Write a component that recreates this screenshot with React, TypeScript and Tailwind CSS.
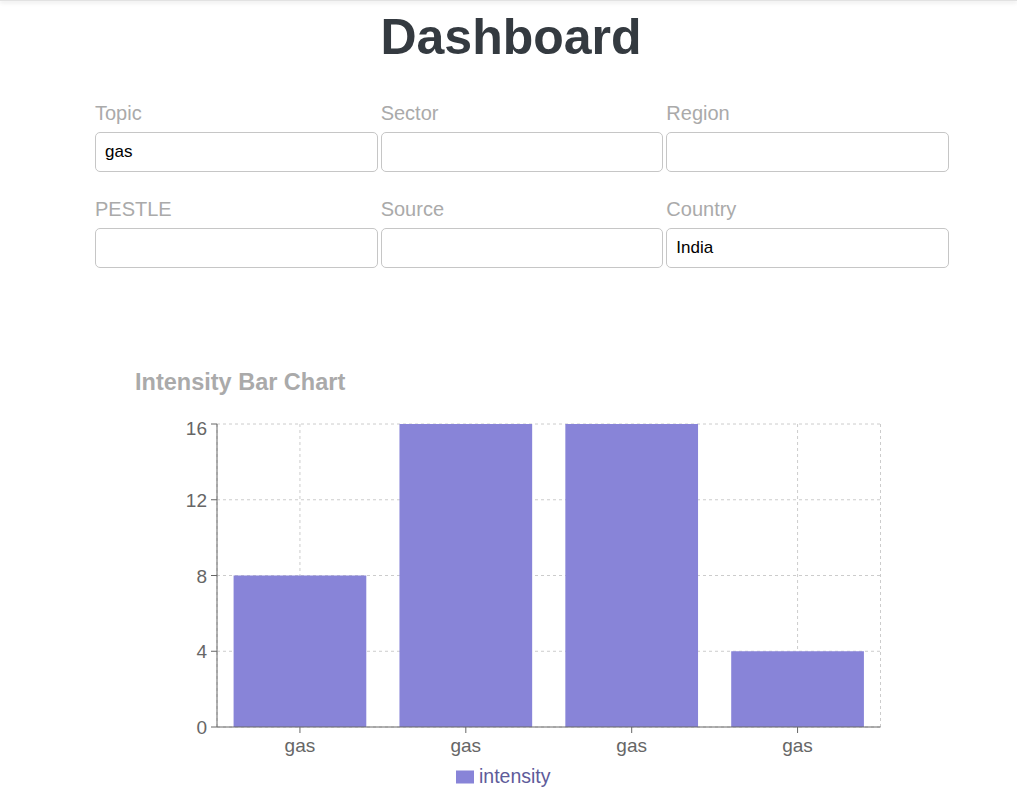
const fields = [
  { label: 'Topic', value: 'gas' },
  { label: 'Sector', value: '' },
  { label: 'Region', value: '' },
  { label: 'PESTLE', value: '' },
  { label: 'Source', value: '' },
  { label: 'Country', value: 'India' },
];

const data = [8, 16, 16, 4];

function IntensityChart() {
  const left = 82;
  const right = 745.5;
  const top = 24;
  const bottom = 327;
  const band = (right - left) / data.length;
  const yOf = (v: number) => bottom - (v / 16) * (bottom - top);
  const ticks = [0, 4, 8, 12, 16];

  return (
    <svg width={760} height={387} className="block" style={{ fontFamily: '"Liberation Sans", Arial, sans-serif' }}>
      {/* grid */}
      {ticks.map((t) => (
        <line key={t} x1={left} x2={right} y1={yOf(t)} y2={yOf(t)} stroke="#ccc" strokeDasharray="3 3" />
      ))}
      {[left, ...data.map((_, i) => left + band * i + band / 2), right].map((x, i) => (
        <line key={i} x1={x} x2={x} y1={top} y2={bottom} stroke="#ccc" strokeDasharray="3 3" />
      ))}

      {/* bars */}
      {data.map((v, i) => (
        <rect
          key={i}
          x={left + band * i + band * 0.1}
          y={yOf(v)}
          width={band * 0.8}
          height={bottom - yOf(v)}
          fill="#8884d8"
        />
      ))}

      {/* y axis */}
      <line x1={left} x2={left} y1={top} y2={bottom} stroke="#666" />
      {ticks.map((t) => (
        <g key={t}>
          <line x1={left - 6} x2={left} y1={yOf(t)} y2={yOf(t)} stroke="#666" />
          <text x={left - 10} y={yOf(t) + (t === 16 ? 11 : 7)} textAnchor="end" fontSize={19} fill="#666">
            {t}
          </text>
        </g>
      ))}

      {/* x axis */}
      <line x1={left} x2={right} y1={bottom} y2={bottom} stroke="#666" />
      {data.map((_, i) => {
        const cx = left + band * i + band / 2;
        return (
          <g key={i}>
            <line x1={cx} x2={cx} y1={bottom} y2={bottom + 6} stroke="#666" />
            <text x={cx} y={bottom + 25} textAnchor="middle" fontSize={19} fill="#666">
              gas
            </text>
          </g>
        );
      })}

      {/* legend */}
      <rect x={321} y={370.5} width={18} height={13} fill="#8884d8" />
      <text x={344} y={383} fontSize={19.5} fill="#5e5b9a">
        intensity
      </text>
    </svg>
  );
}

export default function App() {
  return (
    <div className="min-h-[787px] bg-white font-['Liberation_Sans',Arial,sans-serif]">
      <div className="h-px bg-[#e2e2e2] shadow-[0_1px_4px_rgba(0,0,0,0.25)]" />
      <h1 className="mt-[8px] pl-[5px] text-center text-[50px] font-bold leading-[56px] text-[#343a40]">Dashboard</h1>

      <div className="ml-[95px] mt-[37px] grid w-[854px] grid-cols-3 gap-x-[3px] gap-y-[26px]">
        {fields.map((f) => (
          <div key={f.label}>
            <label className="mb-[7px] block text-[20px] leading-[23px] text-[#aaa]">{f.label}</label>
            <input
              readOnly
              value={f.value}
              className="block h-[40px] w-full rounded-[5px] border-[1.5px] border-[#c6c6c6] bg-white px-[9px] text-[17px] text-black outline-none"
            />
          </div>
        ))}
      </div>

      <div className="ml-[135px] mt-[101px]">
        <h3 className="text-[23.5px] font-bold leading-[27px] text-[#aaa]">Intensity Bar Chart</h3>
        <div className="mt-[4px]">
          <IntensityChart />
        </div>
      </div>
    </div>
  );
}
